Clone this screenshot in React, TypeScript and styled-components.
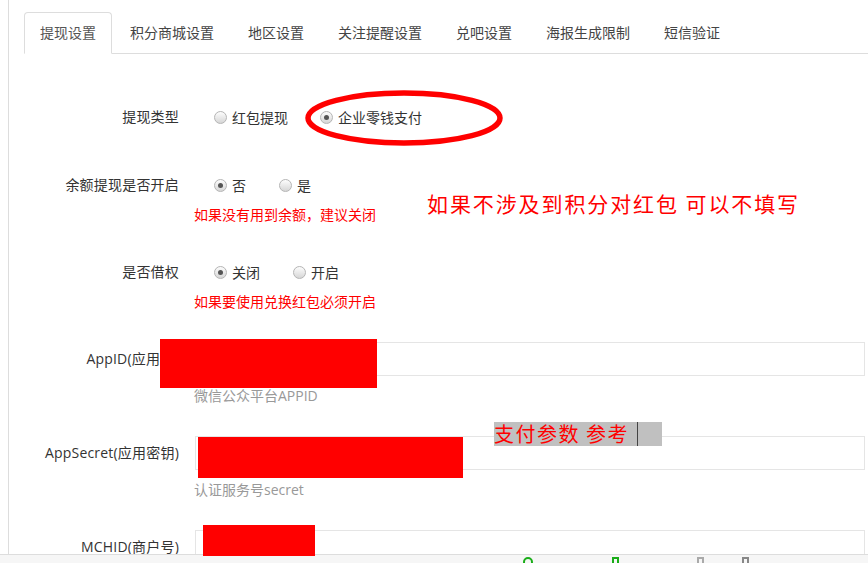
import React from 'react';
import styled, { createGlobalStyle } from 'styled-components';

const GlobalStyle = createGlobalStyle`
  html, body {
    margin: 0;
    padding: 0;
    background: #fff;
  }
  body {
    font-family: 'Open Sans', 'Noto Sans CJK SC', sans-serif;
    font-size: 14px;
    color: #333;
  }
`;

// Layout
const Page = styled.div`
  position: relative;
  width: 868px;
  height: 563px;
  overflow: hidden;
`;

const Shell = styled.div`
  margin-left: 8px;
  height: 554px;
  border-left: 1px solid #ddd;
  padding: 12px 3px 0 15px;
  box-sizing: border-box;
`;

const TabBar = styled.ul`
  display: flex;
  margin: 0 -3px 0 0;
  padding: 0;
  list-style: none;
  border-bottom: 1px solid #ddd;
`;

const Tab = styled.li<{ $active?: boolean }>`
  margin: 0 2px -1px 0;
  padding: 10px 15px;
  line-height: 20px;
  font-size: 14px;
  color: ${p => (p.$active ? '#555' : '#444')};
  border: 1px solid ${p => (p.$active ? '#ddd' : 'transparent')};
  border-bottom-color: ${p => (p.$active ? '#fff' : 'transparent')};
  border-radius: 4px 4px 0 0;
  background: ${p => (p.$active ? '#fff' : 'transparent')};
  white-space: nowrap;
`;

const Form = styled.div`
  padding-top: 46px;
`;

const Group = styled.div<{ $gap: number }>`
  display: grid;
  grid-template-columns: 155px 1fr;
  column-gap: 15px;
  margin-bottom: ${p => p.$gap}px;
`;

const Label = styled.div`
  height: 34px;
  line-height: 34px;
  text-align: right;
  font-size: 14px;
  letter-spacing: 0.2px;
  color: #333;
  white-space: nowrap;
`;

const Controls = styled.div`
  display: flex;
  flex-direction: column;
`;

const RadioRow = styled.div`
  display: flex;
  align-items: center;
  height: 34px;
  padding-left: 20px;
`;

const RadioOption = styled.label<{ $width: number }>`
  display: flex;
  align-items: center;
  gap: 5px;
  width: ${p => p.$width}px;
  font-size: 14px;
  color: #333;
`;

const RadioDot = styled.span<{ $checked?: boolean }>`
  position: relative;
  width: 11px;
  height: 11px;
  border-radius: 50%;
  border: 1px solid #b5b5b5;
  background: linear-gradient(#fdfdfd, #d6d6d6);
  flex: none;

  &::after {
    content: '';
    display: ${p => (p.$checked ? 'block' : 'none')};
    position: absolute;
    left: 3px;
    top: 3px;
    width: 5px;
    height: 5px;
    border-radius: 50%;
    background: #555;
  }
`;

const Help = styled.div<{ $tone: 'red' | 'gray'; $top: number }>`
  margin-top: ${p => p.$top}px;
  line-height: 18px;
  font-size: 14px;
  color: ${p => (p.$tone === 'red' ? '#f00' : '#999')};
  white-space: nowrap;
`;

const Input = styled.div`
  height: 34px;
  box-sizing: border-box;
  border: 1px solid #e5e5e5;
  margin-left: 1px;
  background: #fff;
`;

const StatusBar = styled.div`
  position: relative;
  height: 9px;
  border-top: 1px solid #ddd;
  background: #f6f6f6;
  overflow: hidden;
`;

const StatusMark = styled.span<{ $x: number; $color: string; $round?: boolean }>`
  position: absolute;
  left: ${p => p.$x}px;
  top: 2px;
  width: ${p => (p.$round ? 10 : 7)}px;
  height: 10px;
  box-sizing: border-box;
  border: 2px solid ${p => p.$color};
  border-radius: ${p => (p.$round ? '50%' : '0')};
`;

// Annotations drawn on top of the screenshot
const Redact = styled.div`
  position: absolute;
  background: #f00;
`;

const Ellipse = styled.svg`
  position: absolute;
  left: 300px;
  top: 88px;
`;

const Note = styled.div`
  position: absolute;
  left: 427px;
  top: 189px;
  font-family: 'Noto Sans CJK SC', sans-serif;
  font-size: 21px;
  line-height: 28px;
  letter-spacing: 1.9px;
  font-weight: 400;
  color: #f00;
  white-space: nowrap;
`;

const Ref = styled.div`
  position: absolute;
  left: 494px;
  top: 422px;
  width: 168px;
  height: 24px;
  background: #c0c0c0;
  font-family: 'Noto Sans CJK SC', sans-serif;
  font-size: 20px;
  line-height: 24px;
  letter-spacing: 1.5px;
  font-weight: 400;
  color: #f00;
  white-space: nowrap;

  &::after {
    content: '';
    position: absolute;
    left: 143px;
    top: 0;
    width: 1px;
    height: 24px;
    background: #444;
  }
`;

const tabs = ['提现设置', '积分商城设置', '地区设置', '关注提醒设置', '兑吧设置', '海报生成限制', '短信验证'];

type Option = { text: string; checked?: boolean; width: number };

const RadioField: React.FC<{ label: string; options: Option[]; help?: string; gap: number }> = ({ label, options, help, gap }) => (
  <Group $gap={gap}>
    <Label>{label}</Label>
    <Controls>
      <RadioRow>
        {options.map(o => (
          <RadioOption key={o.text} $width={o.width}>
            <RadioDot $checked={o.checked} />
            {o.text}
          </RadioOption>
        ))}
      </RadioRow>
      {help && <Help $tone="red" $top={4}>{help}</Help>}
    </Controls>
  </Group>
);

const TextField: React.FC<{ label: string; help?: string; gap: number }> = ({ label, help, gap }) => (
  <Group $gap={gap}>
    <Label>{label}</Label>
    <Controls>
      <Input />
      {help && <Help $tone="gray" $top={11}>{help}</Help>}
    </Controls>
  </Group>
);

const App: React.FC = () => (
  <Page>
    <GlobalStyle />
    <Shell>
      <TabBar>
        {tabs.map((t, i) => (
          <Tab key={t} $active={i === 0}>{t}</Tab>
        ))}
      </TabBar>
      <Form>
        <RadioField
          label="提现类型"
          gap={34}
          options={[
            { text: '红包提现', width: 106 },
            { text: '企业零钱支付', checked: true, width: 120 },
          ]}
        />
        <RadioField
          label="余额提现是否开启"
          gap={31}
          help="如果没有用到余额，建议关闭"
          options={[
            { text: '否', checked: true, width: 65 },
            { text: '是', width: 40 },
          ]}
        />
        <RadioField
          label="是否借权"
          gap={31}
          help="如果要使用兑换红包必须开启"
          options={[
            { text: '关闭', checked: true, width: 79 },
            { text: '开启', width: 50 },
          ]}
        />
        <TextField label="AppID(应用ID)" help="微信公众平台APPID" gap={31} />
        <TextField label="AppSecret(应用密钥)" help="认证服务号secret" gap={31} />
        <TextField label="MCHID(商户号)" gap={0} />
      </Form>
    </Shell>
    <StatusBar>
      <StatusMark $x={523} $color="#1aad19" $round />
      <StatusMark $x={612} $color="#1aad19" />
      <StatusMark $x={697} $color="#aaa" />
      <StatusMark $x={742} $color="#888" />
    </StatusBar>

    <Redact style={{ left: 160, top: 339, width: 217, height: 49 }} />
    <Redact style={{ left: 198, top: 437, width: 265, height: 41 }} />
    <Redact style={{ left: 203, top: 525, width: 112, height: 31 }} />

    <Ellipse width="206" height="62" viewBox="0 0 206 62">
      <ellipse cx="104" cy="30" rx="96" ry="25" fill="none" stroke="#f00" strokeWidth="5.5" />
    </Ellipse>

    <Note>如果不涉及到积分对红包 可以不填写</Note>
    <Ref>支付参数 参考</Ref>
  </Page>
);

export default App;
